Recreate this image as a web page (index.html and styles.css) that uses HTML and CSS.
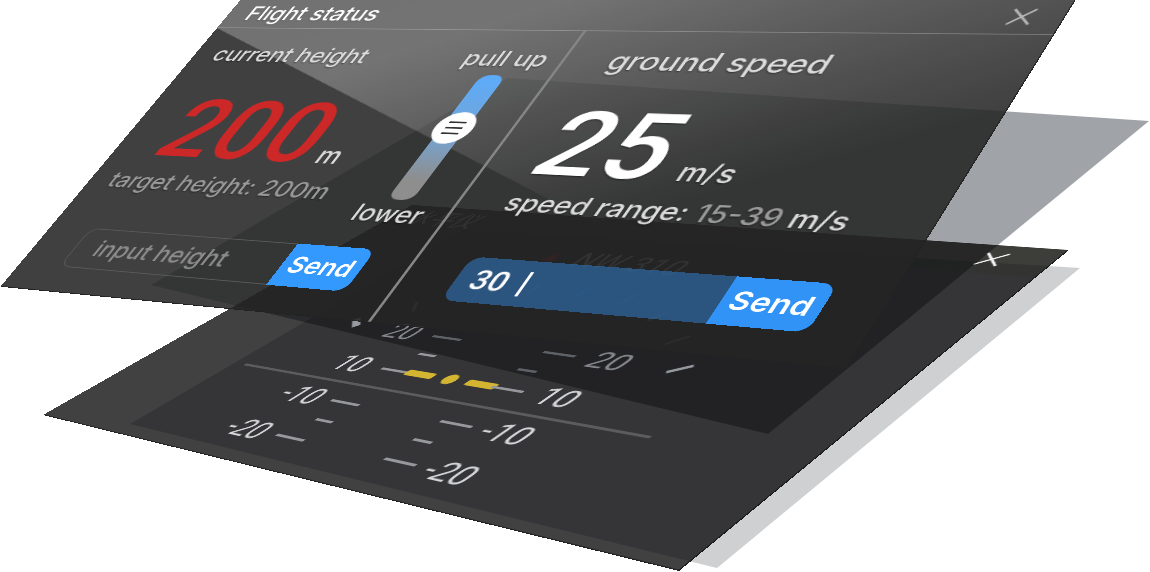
FILE: index.html
```html
<!DOCTYPE html>
<html lang="en">
<head>
<meta charset="utf-8">
<title>Flight status</title>
<link rel="stylesheet" href="styles.css">
</head>
<body>
<main class="scene">
  <div class="shade shade-low"></div>

  <section class="panel level" aria-label="Level">
    <header class="bar">
      <h2 class="level-title" lang="zh">水平仪</h2>
      <button class="close" type="button" aria-label="Close level">
        <svg viewBox="0 0 20 20"><path d="M1 1 19 19M19 1 1 19"/></svg>
      </button>
    </header>
    <p class="heading"><span class="pointer"></span>NW 310</p>
    <svg class="ring" viewBox="0 0 720 400">
      <g transform="translate(360 355)">
        <path class="north" d="M0-245V-226"/>
        <path transform="rotate(13)" d="M0-245V-226"/>
        <path transform="rotate(26)" d="M0-245V-226"/>
        <path transform="rotate(39)" d="M0-245V-226"/>
        <path class="end" transform="rotate(51)" d="M0-245V-226"/>
        <path transform="rotate(-13)" d="M0-245V-226"/>
        <path transform="rotate(-26)" d="M0-245V-226"/>
        <path transform="rotate(-39)" d="M0-245V-226"/>
        <path class="end left" transform="rotate(-51)" d="M0-245V-228"/>
      </g>
    </svg>
    <div class="scale">
      <span>20</span><i class="tick"></i><b></b><i class="tick"></i><span>20</span>
      <span></span><i class="tick short"></i><b></b><i class="tick short end"></i><span></span>
      <span>10</span><i class="tick"></i><b class="craft"><i class="wing"></i><i class="nose"></i><i class="wing"></i></b><i class="tick"></i><span>10</span>
      <hr class="horizon">
      <span>-10</span><i class="tick"></i><b></b><i class="tick"></i><span>-10</span>
      <span></span><i class="tick short"></i><b></b><i class="tick short end"></i><span></span>
      <span>-20</span><i class="tick"></i><b></b><i class="tick"></i><span>-20</span>
    </div>
  </section>

  <div class="shade shade-mid"></div>

  <section class="panel flight" aria-label="Flight status">
    <div class="gloss"></div>
    <header class="bar">
      <h1>Flight status</h1>
      <button class="close" type="button" aria-label="Close flight status">
        <svg viewBox="0 0 20 20"><path d="M1 1 19 19M19 1 1 19"/></svg>
      </button>
    </header>
    <div class="columns">
      <section class="half height">
        <div class="readout">
          <h2>current height</h2>
          <p class="value alert">200<span class="unit">m</span></p>
          <p class="note muted">target height: 200m</p>
        </div>
        <div class="lift">
          <label for="lift">pull up</label>
          <input id="lift" class="slider" type="range" min="0" max="120" value="71">
          <span>lower</span>
        </div>
        <form class="field">
          <input type="text" placeholder="input height" aria-label="Height">
          <button type="button">Send</button>
        </form>
      </section>
      <section class="half speed">
        <div class="readout">
          <h2>ground speed</h2>
          <p class="value">25<span class="unit">m/s</span></p>
          <p class="note">speed range: <span class="muted">15-39</span> m/s</p>
        </div>
        <form class="field active">
          <input type="text" value="30" aria-label="Speed">
          <i class="caret"></i>
          <button type="button">Send</button>
        </form>
      </section>
    </div>
  </section>
</main>
</body>
</html>
```

FILE: styles.css
```css
* { box-sizing: border-box; }

body {
  margin: 0;
  background: #fff;
  color: #dcdcdc;
  font-family: Inter, "Liberation Sans", sans-serif;
  font-size: 27px;
  font-weight: 500;
  line-height: 32px;
}

h1, h2, p { margin: 0; font-size: inherit; font-weight: 500; }

button, input { font: inherit; color: inherit; border: 0; padding: 0; margin: 0; }

.scene {
  position: relative;
  min-height: 100vh;
  overflow: hidden;
  background: #fff;
}

/* Translucent planes that lie between the panels */
.shade {
  position: absolute;
  inset: 0;
  mix-blend-mode: multiply;
}
.shade-low {
  background: #cfd0d2;
  clip-path: polygon(462px 230px, 1080px 268px, 717px 568px, 130px 424px);
}
.shade-mid {
  background: #a0a3a8;
  clip-path: polygon(507px 78px, 1149px 121px, 768px 434px, 151px 285px);
}

/* Panels are flat layouts projected onto the scene */
.panel {
  position: absolute;
  top: 0;
  left: 0;
  transform-origin: 0 0;
}

.bar {
  display: flex;
  align-items: center;
  justify-content: space-between;
  height: 42px;
  padding: 0 24px;
}

.close {
  width: 20px;
  height: 20px;
  background: none;
}
.close svg {
  display: block;
  width: 20px;
  height: 20px;
  fill: none;
  stroke: #b4b4b4;
  stroke-width: 2;
}

/* Level panel */
.level {
  width: 720px;
  height: 400px;
  background: rgba(0, 0, 2, 0.745);
  border-right: 1px solid #161616;
  border-bottom: 1px solid #222;
  transform: matrix3d(0.49861, -0.034292, 0, -0.00038718, -0.93733, 0.3819, 0, -0.0003448, 0, 0, 1, 0, 412, 205, 0, 1);
}
.level .bar { background: rgba(40, 40, 20, 0.16); padding: 0 38px 0 28px; }
.level .close svg { stroke: #fff; }
.level-title {
  font-family: "Noto Sans CJK SC", sans-serif;
  font-size: 32px;
  font-weight: 400;
}
.heading {
  display: flex;
  align-items: center;
  justify-content: center;
  gap: 20px;
  margin: 14px 30px 0 0;
  font-family: Roboto, sans-serif;
  font-size: 34px;
  font-weight: 400;
}
.pointer {
  border: 8px solid transparent;
  border-top: 0;
  border-bottom: 14px solid #e02020;
}
.ring {
  position: absolute;
  inset: 0;
  fill: none;
  stroke: #9a9ca0;
  stroke-width: 3;
}
.ring .north { stroke: #3399ff; }
.ring .end { stroke: #f0f2f4; stroke-width: 4; }
.ring .left { stroke-width: 7; }

.scale {
  display: grid;
  grid-template-columns: 72px 34px 94px 34px 72px;
  grid-template-rows: 26px 26px 26px 24px 24px 26px 26px;
  justify-content: center;
  align-items: center;
  margin-top: 108px;
  font-family: Roboto, sans-serif;
  font-size: 32px;
  font-weight: 400;
  line-height: 26px;
  text-align: center;
  color: #d4d6d9;
}
.tick { height: 3px; background: #96989c; }
.short { width: 20px; justify-self: end; }
.short.end { justify-self: start; }
.horizon {
  grid-column: 1 / -1;
  justify-self: center;
  width: 460px;
  height: 3px;
  margin: 0 -80px;
  border: 0;
  background: #5c5c5e;
}
.craft {
  display: flex;
  align-items: center;
  justify-content: space-between;
  margin: 0 -4px;
}
.wing { width: 32px; height: 8px; border-radius: 2px; background: #d3b531; }
.nose { width: 14px; height: 14px; border-radius: 50%; background: #d3b531; }

/* Flight panel */
.flight {
  width: 840px;
  background: rgba(36, 36, 36, 0.872);
  border-right: 1px solid #222;
  border-bottom: 1px solid #222;
  text-shadow: 0 1px 2px rgba(0, 0, 0, 0.5);
  transform: matrix3d(0.73298, -0.000415, 0, -0.00024995, -0.60691, 0.6749, 0, -0.00017419, 0, 0, 1, 0, 217, 28, 0, 1) translateY(-42px);
}
.flight .bar { border-bottom: 1px solid rgba(255, 255, 255, 0.25); }
.flight h1 { color: #fff; }
.gloss {
  position: absolute;
  inset: 0;
  background: linear-gradient(152deg, rgba(255, 255, 255, 0.26), rgba(255, 255, 255, 0.27) 24%, rgba(255, 255, 255, 0) 68%);
  clip-path: polygon(0 0, 100% 0, 100% 97%, 0 42px);
}

.columns {
  position: relative;
  display: grid;
  grid-template-columns: 1fr 1fr;
  height: 356px;
}
.half {
  display: grid;
  grid-template-rows: 254px 50px;
  padding: 22px 0 0;
}
.height {
  grid-template-columns: 1fr 116px;
  border-right: 3px solid #858585;
}
.readout { padding-left: 25px; white-space: nowrap; }
.value {
  display: flex;
  align-items: baseline;
  gap: 18px;
  height: 96px;
  margin: 39px 0 8px;
  font-family: Roboto, sans-serif;
  font-size: 108px;
  font-weight: 500;
  line-height: 96px;
  color: #fff;
}
.unit {
  font-family: Inter, sans-serif;
  font-size: 28px;
  line-height: 32px;
  color: #dcdcdc;
}
.alert { gap: 8px; padding-left: 22px; color: #cc2828; text-shadow: none; }
.muted { color: #9a9a9a; }

.lift {
  display: flex;
  flex-direction: column;
  align-items: center;
}
.slider {
  appearance: none;
  writing-mode: vertical-lr;
  direction: rtl;
  width: 38px;
  height: 158px;
  margin: 5px 0 2px;
  background: none;
}
.slider::-webkit-slider-runnable-track {
  width: 26px;
  height: 158px;
  border-radius: 10px;
  background: linear-gradient(#5cabfb, #74a4d4 48%, #8e8e8e 84%);
}
.slider::-webkit-slider-thumb {
  appearance: none;
  width: 40px;
  height: 40px;
  margin-left: -7px;
  border-radius: 50%;
  background:
    linear-gradient(#333, #333) center 12px / 18px 2px no-repeat,
    linear-gradient(#333, #333) center 19px / 18px 2px no-repeat,
    linear-gradient(#333, #333) center 26px / 18px 2px no-repeat,
    #fff;
}

.field {
  position: relative;
  grid-column: 1 / -1;
  display: flex;
  width: 324px;
  margin-left: 49px;
}
.field input {
  flex: 1;
  min-width: 0;
  padding-left: 25px;
  border: 1px solid #5a5a5c;
  border-right: 0;
  border-radius: 12px 0 0 12px;
  background: none;
}
.field input::placeholder { color: #8c8c8c; opacity: 1; }
.field button {
  width: 83px;
  border-radius: 0 12px 12px 0;
  background: #3399ff;
  color: #fff;
  font-weight: 600;
}
.active input {
  padding-left: 16px;
  border: 0;
  background: rgba(45, 104, 165, 0.7);
  color: #fff;
  font-family: Roboto, sans-serif;
  font-size: 30px;
}
.caret {
  position: absolute;
  top: 12px;
  left: 64px;
  width: 3px;
  height: 27px;
  background: #fff;
}

.speed .readout { padding-left: 46px; }
.speed .value { margin-left: -3px; }
.speed h2 { font-size: 31px; }
.speed .field { margin-left: 50px; }
.speed .field button { background: #3193f5; }
```
